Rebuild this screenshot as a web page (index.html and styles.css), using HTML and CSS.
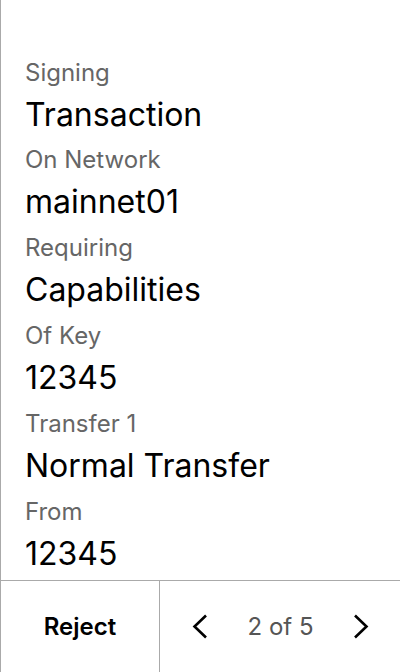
FILE: index.html
```html
<!DOCTYPE html>
<html>
<head>
<meta charset="utf-8">
<link rel="stylesheet" href="styles.css">
</head>
<body>
<div class="screen">
  <main class="content">
    <div class="field"><div class="label">Signing</div><div class="value">Transaction</div></div>
    <div class="field"><div class="label">On Network</div><div class="value">mainnet01</div></div>
    <div class="field"><div class="label">Requiring</div><div class="value">Capabilities</div></div>
    <div class="field"><div class="label">Of Key</div><div class="value">12345</div></div>
    <div class="field"><div class="label">Transfer 1</div><div class="value">Normal Transfer</div></div>
    <div class="field"><div class="label">From</div><div class="value">12345</div></div>
  </main>
  <footer class="footer">
    <div class="reject">Reject</div>
    <div class="pager">
      <svg class="chev" width="16" height="25" viewBox="0 0 16 25"><path d="M14 1.5 L2.5 12.5 L14 23.5" fill="none" stroke="#000" stroke-width="2.6"/></svg>
      <span class="count">2 of 5</span>
      <svg class="chev" width="16" height="25" viewBox="0 0 16 25"><path d="M2 1.5 L13.5 12.5 L2 23.5" fill="none" stroke="#000" stroke-width="2.6"/></svg>
    </div>
  </footer>
</div>
</body>
</html>
```
FILE: styles.css
```css
* { box-sizing: border-box; }
html, body { margin: 0; padding: 0; background: #fff; }
body { font-family: Inter, "Noto Sans", sans-serif; }
.screen {
  width: 400px;
  height: 672px;
  display: flex;
  flex-direction: column;
  border-left: 1px solid #aaa;
}
.content {
  flex: 1;
  overflow: hidden;
  padding: 57.5px 0 0 24px;
  display: flex;
  flex-direction: column;
  gap: 10.9px;
}
.field { display: flex; flex-direction: column; gap: 7px; }
.label { font-size: 24px; line-height: 30px; color: #666; }
.value { font-size: 32px; line-height: 40px; color: #000; }
.footer {
  height: 92px;
  flex: none;
  display: flex;
  border-top: 1px solid #aaa;
}
.reject {
  width: 159px;
  border-right: 1px solid #aaa;
  display: flex;
  align-items: center;
  justify-content: center;
  font-size: 24px;
  font-weight: 600;
  color: #000;
  padding-bottom: 1px;
}
.pager {
  flex: 1;
  display: flex;
  align-items: center;
  justify-content: space-between;
  padding: 0 31px 1px 32px;
}
.count { font-size: 24px; color: #555; }
.chev { display: block; }
```
